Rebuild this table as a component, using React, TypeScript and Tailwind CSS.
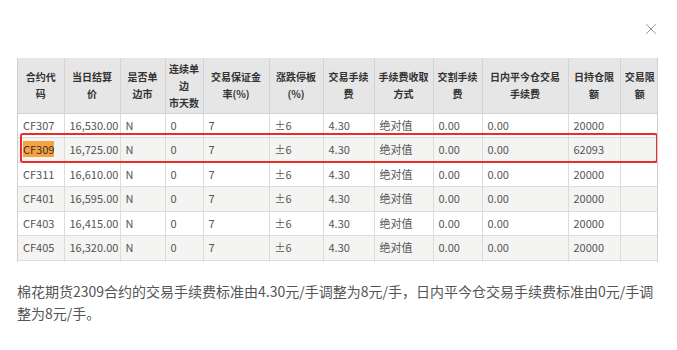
import { X } from 'lucide-react'

const COLS = [46, 56, 45, 38, 66, 54, 51, 59, 49, 86, 52, 39]

const HEADERS: string[][] = [
  ['合约代', '码'],
  ['当日结算', '价'],
  ['是否单', '边市'],
  ['连续单', '边', '市天数'],
  ['交易保证金', '率(%)'],
  ['涨跌停板', '(%)'],
  ['交易手续', '费'],
  ['手续费收取', '方式'],
  ['交割手续', '费'],
  ['日内平今仓交易', '手续费'],
  ['日持仓限', '额'],
  ['交易限', '额'],
]

const ROWS = [
  ['CF307', '16,530.00', 'N', '0', '7', '±6', '4.30', '绝对值', '0.00', '0.00', '20000', ''],
  ['CF309', '16,725.00', 'N', '0', '7', '±6', '4.30', '绝对值', '0.00', '0.00', '62093', ''],
  ['CF311', '16,610.00', 'N', '0', '7', '±6', '4.30', '绝对值', '0.00', '0.00', '20000', ''],
  ['CF401', '16,595.00', 'N', '0', '7', '±6', '4.30', '绝对值', '0.00', '0.00', '20000', ''],
  ['CF403', '16,415.00', 'N', '0', '7', '±6', '4.30', '绝对值', '0.00', '0.00', '20000', ''],
  ['CF405', '16,320.00', 'N', '0', '7', '±6', '4.30', '绝对值', '0.00', '0.00', '20000', ''],
]

export default function App() {
  return (
    <div className="w-[677px] h-[350px] bg-white relative overflow-hidden"
      style={{ fontFamily: '"Noto Sans CJK SC", "Noto Sans", sans-serif' }}>
      {/* close */}
      <button type="button" className="absolute left-[642px] top-[20px] text-[#8c8c8c]">
        <X size={18} strokeWidth={1.2} />
      </button>

      <div className="pt-[58px] pl-[17px]">
        <div className="relative w-[641px] h-[204px] overflow-hidden border-l border-r border-[#cfcfcf]">
          <table className="table-fixed border-collapse w-[641px]">
            <colgroup>
              {COLS.map((w, i) => <col key={i} style={{ width: w }} />)}
            </colgroup>
            <thead>
              <tr className="bg-[#e6e6e6] h-[55px]">
                {HEADERS.map((h, i) => (
                  <th key={i} className="text-[10px] leading-[17px] font-bold text-[#333] text-center align-middle border-r border-b border-[#d3d3d3] last:border-r-0 px-0">
                    {h.map((line, j) => <div key={j} className="whitespace-nowrap">{line}</div>)}
                  </th>
                ))}
              </tr>
            </thead>
            <tbody>
              {ROWS.map((r, ri) => (
                <tr key={ri} className={ri % 2 === 1 ? 'bg-[#f4f4f2] h-[24.5px]' : 'bg-white h-[24.5px]'}>
                  {r.map((c, ci) => (
                    <td key={ci} className="text-[11px] leading-[15px] text-[#555] pl-[5px] pr-0 py-0 border-r border-b border-[#dcdcdc] last:border-r-0 whitespace-nowrap align-middle">
                      {ri === 1 && ci === 0
                        ? <span className="bg-[#f7a13f] text-[#333]">{c}</span>
                        : c}
                    </td>
                  ))}
                </tr>
              ))}
              {/* next row, cut off by the scroll area */}
              <tr className="bg-white h-[24.5px]">
                {COLS.map((_, ci) => (
                  <td key={ci} className="border-r border-[#dcdcdc] last:border-r-0" />
                ))}
              </tr>
            </tbody>
          </table>
          {/* highlight box over CF309 row */}
          <div className="absolute left-[2px] top-[75px] w-[638px] h-[30px] border-2 border-[#ee2a2a] rounded-[3px]" />
        </div>

        <p className="mt-[18px] w-[646px] text-[14px] leading-[22px] text-[#555]">
          棉花期货2309合约的交易手续费标准由4.30元/手调整为8元/手，日内平今仓交易手续费标准由0元/手调整为8元/手。
        </p>
      </div>
    </div>
  )
}
